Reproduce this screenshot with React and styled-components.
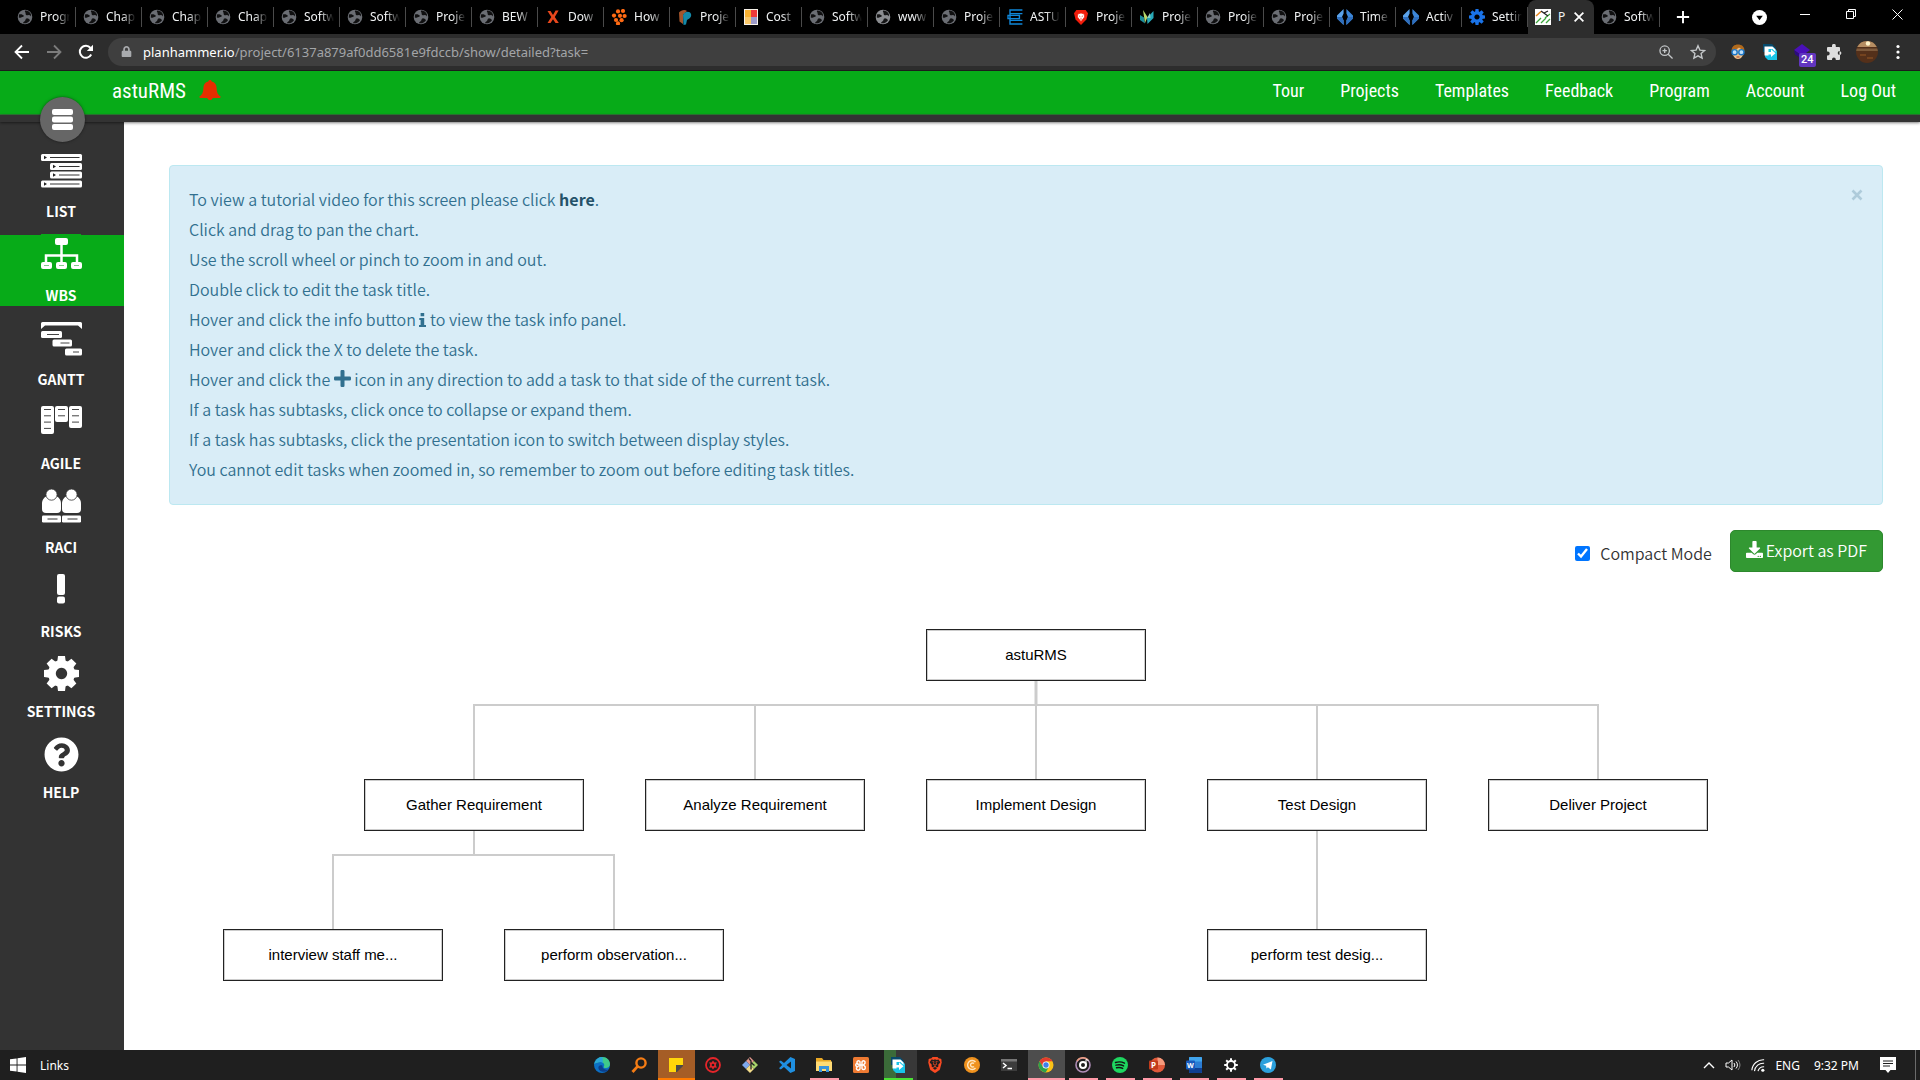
import React from "react";
import styled, { createGlobalStyle, css } from "styled-components";
import { FaDownload, FaQuestionCircle, FaLock } from "react-icons/fa";
import { SiBrave } from "react-icons/si";

const UI = `"Noto Sans", "Open Sans", sans-serif`;
const BODY = `"Noto Sans CJK SC", "Noto Sans", sans-serif`;
const NAV = `"Roboto Condensed", "Liberation Sans Narrow", Roboto, sans-serif`;

const GlobalStyle = createGlobalStyle`
  *, *::before, *::after { box-sizing: border-box; }
  body { margin: 0; background: #fff; font-family: ${UI}; }
  button { font: inherit; color: inherit; background: none; border: 0; padding: 0; cursor: pointer; }
  a { color: inherit; text-decoration: none; }
  svg { display: block; flex: none; }
`;

/* ---------- layout ---------- */

const Screen = styled.div`
  display: flex;
  flex-direction: column;
  min-height: 100vh;
`;

const TabStrip = styled.div`
  display: flex;
  align-items: stretch;
  height: 34px;
  padding-left: 10px;
  background: #000;
  color: #e8eaed;
`;

const Tab = styled.button`
  position: relative;
  display: flex;
  align-items: center;
  gap: 7px;
  width: 66px;
  padding-left: 7px;
  font-size: 12px;
  line-height: 16px;
  text-align: left;
  color: #f1f3f4;
  ${(p) =>
    p.$active
      ? css`
          padding-right: 8px;
          background: #2d2d2d;
          border-radius: 8px 8px 0 0;
        `
      : css`
          &::after {
            content: "";
            position: absolute;
            right: 0;
            top: 7px;
            height: 20px;
            width: 1px;
            background: #4a4a4a;
          }
        `}
`;

const TabTitle = styled.span`
  flex: 1;
  white-space: nowrap;
  ${(p) => !p.$solid && css`mask-image: linear-gradient(to right, #000 16px, transparent 30px);`}
`;

const NewTab = styled.button`
  display: grid;
  place-items: center;
  width: 46px;
`;

const WindowControls = styled.div`
  display: flex;
  align-items: flex-start;
  margin-left: auto;
`;

const WindowButton = styled.button`
  display: grid;
  place-items: center;
  width: 46px;
  height: ${(p) => (p.$tall ? 34 : 28)}px;
`;

const Toolbar = styled.div`
  display: flex;
  align-items: center;
  height: 37px;
  padding: 0 12px 1px;
  background: #2d2d2d;
  border-bottom: 1px solid #1c1c1c;
  color: #e8eaed;
`;

const ToolIcons = styled.div`
  display: flex;
  align-items: center;
  gap: ${(p) => p.$gap}px;
`;

const ToolButton = styled.button`
  display: grid;
  place-items: center;
  width: 20px;
  height: 24px;
`;

const AddressBar = styled.div`
  display: flex;
  align-items: center;
  flex: 1;
  height: 28px;
  margin: 0 12px;
  padding: 0 8px 0 13px;
  gap: 11px;
  border-radius: 14px;
  background: #3f3f3f;
  color: #a3a5a8;
  font-size: 13px;
`;

const Url = styled.div`
  flex: 1;
  white-space: nowrap;
  b { font-weight: 400; color: #fff; }
`;

const ExtensionButton = styled(ToolButton)`
  position: relative;
`;

const ExtensionBadge = styled.span`
  position: absolute;
  left: 7px;
  top: 13px;
  padding: 0 2px;
  border-radius: 2px;
  background: #6236c0;
  color: #fff;
  font: 500 11px/14px Roboto, sans-serif;
`;

const SiteHeader = styled.header`
  display: flex;
  align-items: center;
  justify-content: space-between;
  height: 44px;
  padding: 0 24px 4px 112px;
  background: #07ab18;
  border-bottom: 1px solid #2c7a33;
  color: #fff;
  font-family: ${NAV};
  font-size: 18px;
  line-height: 24px;
`;

const ProjectName = styled.h1`
  display: flex;
  align-items: center;
  gap: 13px;
  margin: 0;
  font-size: 21px;
  font-weight: 400;
`;

const SiteNav = styled.nav`
  display: flex;
  gap: 36px;
`;

const Divider = styled.div`
  position: relative;
  z-index: 1;
  height: 7px;
  background: #333;
  box-shadow: 0 1px 3px rgba(0, 0, 0, 0.5);
`;

const MenuButton = styled.button`
  position: absolute;
  left: 40px;
  top: -18px;
  display: grid;
  place-items: center;
  width: 45px;
  height: 45px;
  border-radius: 50%;
  background: #666;
  box-shadow: 0 0 3px rgba(0, 0, 0, 0.5);
`;

const Workspace = styled.div`
  display: flex;
  flex: 1;
`;

const Sidebar = styled.nav`
  display: flex;
  flex-direction: column;
  gap: 9px;
  width: 124px;
  padding-top: 29px;
  background: #333;
  color: #fff;
`;

const SideGroup = styled.div`
  display: flex;
  flex-direction: column;
  gap: ${(p) => p.$gap}px;
`;

const SideItem = styled.a`
  display: flex;
  flex-direction: column;
  align-items: center;
  justify-content: space-between;
  height: 71px;
  padding: ${(p) => (p.$low ? 5 : 3)}px 2px 1px 0;
  font: 700 14px/20px ${BODY};
  background: ${(p) => (p.$active ? "#07ab18" : "transparent")};
  svg { overflow: visible; }
`;

const Main = styled.main`
  flex: 1;
  min-width: 0;
  padding: 43px 37px 0 45px;
  font: 350 16px/30px ${BODY};
`;

const Alert = styled.section`
  display: flex;
  justify-content: space-between;
  align-items: flex-start;
  padding: 18px 19px 20px;
  border: 1px solid #bce8f1;
  border-radius: 4px;
  background: #d9edf7;
  color: #31708f;
`;

const Tips = styled.div`
  p { margin: 0; }
  svg { display: inline-block; vertical-align: -1px; }
  a { font-weight: 700; color: #245269; }
`;

const CloseButton = styled.button`
  display: grid;
  place-items: center;
  width: 13px;
  height: 22px;
  color: #aecbda;
`;

const Actions = styled.div`
  display: flex;
  justify-content: flex-end;
  align-items: center;
  gap: 18px;
  margin-top: 25px;
`;

const CheckLabel = styled.label`
  display: flex;
  align-items: center;
  gap: 10px;
  padding-top: 4px;
  color: #333;
  input { width: 15px; height: 15px; margin: 0; accent-color: #0075ff; }
`;

const ExportButton = styled.button`
  display: flex;
  align-items: center;
  gap: 3px;
  height: 42px;
  padding: 0 15px 2px;
  border: 1px solid #2d882d;
  border-radius: 5px;
  background: #339933;
  color: #fff;
  svg { margin-bottom: 2px; }
`;

const ChartPane = styled.section`
  display: flex;
  justify-content: center;
  padding: 57px 0 69px 20px;
`;

const Chart = styled.div`
  position: relative;
  flex: none;
  width: 1626px;
  height: 352px;
`;

const Node = styled.button`
  position: absolute;
  width: 220px;
  height: 52px;
  border: 1px solid #222;
  outline: 1px solid rgba(0, 0, 0, 0.2);
  outline-offset: -2px;
  background: #fff;
  color: #000;
  font: 400 15px/20px "Liberation Sans", Arial, sans-serif;
`;

const Taskbar = styled.footer`
  display: grid;
  grid-template-columns: 1fr auto 1fr;
  height: 30px;
  background: #1f1f1f;
  color: #fff;
  font-size: 12px;
`;

const StartArea = styled.div`
  display: flex;
  align-items: center;
  gap: 14px;
  padding-left: 10px;
`;

const Apps = styled.div`
  display: flex;
  margin-right: 50px;
`;

const AppButton = styled.button`
  position: relative;
  display: grid;
  place-items: center;
  width: 37px;
  height: 30px;
  background: ${(p) => p.$bg || "transparent"};
  ${(p) =>
    p.$line &&
    css`
      &::after {
        content: "";
        position: absolute;
        left: ${p.$wide ? 0 : 4}px;
        right: ${p.$wide ? 0 : 4}px;
        bottom: 0;
        height: 2px;
        background: ${p.$line};
      }
    `}
`;

const Tray = styled.div`
  display: flex;
  align-items: center;
  justify-content: flex-end;
  gap: 10px;
  padding-right: 4px;
`;

const TrayText = styled.span`
  padding-right: ${(p) => p.$after || 0}px;
  white-space: nowrap;
`;

const TrayEdge = styled.div`
  height: 30px;
  border-left: 1px solid #6b6b6b;
  margin-left: 9px;
`;

/* ---------- icons ---------- */

const Icon = ({ size = 16, box = 16, children, ...rest }) => (
  <svg width={size} height={size} viewBox={`0 0 ${box} ${box}`} fill="none" aria-hidden="true" {...rest}>
    {children}
  </svg>
);

const Globe = ({ light }) => (
  <Icon>
    <circle cx="8" cy="8" r="7.3" fill={light ? "#8b8d91" : "#6b6e74"} />
    <path
      d="M2 5.600c2-1 3.200 0 4.400.6.900.5.400 1.800-1 1.800-1.600 0-1.400 1.400-3.600.6zM8 1.600c-.6 1.500.8 1.600.6 2.800-.2 1.400 1.200 2.200 2.600 1.800 1.200-.4 1.800.4 2.600 1.200l.2-2C13 3 11 1.600 8 1.600zM6 14.200c.2-1.600 1.600-1.400 2.200-2.600.5-1 .2-2 1.400-2.200 1.400-.2 2.400.6 3.400 1.800C11.600 13.600 9 14.800 6 14.200z"
      fill="#000"
      fillOpacity=".85"
    />
  </Icon>
);
const XMark = () => (
  <Icon>
    <path d="M2.500 2h3L8 6l2.600-4.400h3L9.800 8l4 6h-3.300L8 10.200 5.500 14h-3L6.300 8z" fill="#e8471c" />
  </Icon>
);
const Honeycomb = () => (
  <Icon fill="#ff6a13">
    {[[7, 2.4], [12, 2], [3, 6.6], [9, 6.8], [13.6, 7], [5, 11], [10.6, 11.2], [7, 14.4]].map(([x, y], i) => (
      <circle key={i} cx={x} cy={y} r="2.1" />
    ))}
  </Icon>
);
const Leaf = () => (
  <Icon>
    <path d="M2 3.500C4 1 8 0 10 2L6 6v9l-3.500-2.500z" fill="#a3552c" />
    <path d="M6 6c2-4 7-4 8-1s-2 5-4 6l-1 4.500L6.500 16z" fill="#1489a8" />
  </Icon>
);
const Cost = () => (
  <Icon>
    <path d="M1 0h14v16H1z" fill="#f7f2ea" />
    <path d="M2 1h6v7H2z" fill="#f9b233" />
    <path d="M8 1h6v7H8z" fill="#f03a3a" />
    <path d="M2 8h6v7H2z" fill="#fbc96a" />
    <path d="M8 8h6v7H8z" fill="#9d9bc9" />
  </Icon>
);
const EBook = () => (
  <Icon stroke="#0f86d8" strokeWidth="1.4">
    <path d="M15.400 1H3v3.600h12.400M1 6.400h11.400v3.200H1zM3 11.400h12.400M15.400 15H3V1" />
  </Icon>
);
const Shield = () => (
  <Icon>
    <path d="M3.400 1h9.200L15 4.200l-1.600 6.400L8 16l-5.400-5.400L1 4.200z" fill="#f11c0b" />
    <path d="M4.800 5L8 4l3.200 1 .4 3L8 12.600 4.400 8zM6 6.800l1.400 1M10 6.800l-1.400 1M8 9v2" fill="#fff" stroke="#f11c0b" strokeWidth=".7" />
  </Icon>
);
const Teal = () => (
  <Icon>
    <path d="M1 6l4 2.500 1 6L1 11z" fill="#1c8e9c" />
    <path d="M4 1l4.500 7L6 14z" fill="#b7d86b" />
    <path d="M8 9l6.500-7v7L8.500 15z" fill="#27a9b8" />
    <path d="M8 9l3-5 .5 5z" fill="#8fd0c0" />
  </Icon>
);
const Diamond = () => (
  <Icon>
    <path d="M6.600 0v4.600L5 8l1.600 3.400V16L0 9.500v-3z" fill="#5aa2ea" />
    <path d="M9.400 0v4.600L11 8l-1.600 3.400V16L16 9.500v-3z" fill="#3c86d8" />
    <path d="M0 8h5l1.600 3.400V16L0 9.500zM16 8h-5l-1.600 3.400V16L16 9.500z" fill="#2f6fbe" />
  </Icon>
);
const Gear = ({ size = 16, color = "#fff", hole = 2.6, teeth = 3.6, radius = 5.8 }) => (
  <Icon size={size}>
    <path
      fillRule="evenodd"
      fill={color}
      d={`M8 ${8 - radius}a${radius} ${radius} 0 1 0 .01 0zM8 ${8 - hole}a${hole} ${hole} 0 1 1 -.01 0z`}
    />
    {[0, 45, 90, 135, 180, 225, 270, 315].map((a) => (
      <path key={a} transform={`rotate(${a} 8 8)`} fill={color} d={`M${8 - teeth / 2 + 0.3} 0h${teeth - 0.6}l.4 3.2h-${teeth + 0.2}z`} />
    ))}
  </Icon>
);
const PlanMark = () => (
  <Icon>
    <path d="M0 0h16v16H0z" fill="#fff" />
    <path d="M1 14l5-5M6 14l5-5M11 14l4-4M10 9l5-4" stroke="#3aa53a" strokeWidth="1.300" />
    <path d="M1 7l5-4.500" stroke="#e8871e" strokeWidth="1.500" />
    <path d="M6 2l7 5M9 4l4-2" stroke="#222" strokeWidth="1.300" />
  </Icon>
);
const Puzzle = () => (
  <Icon>
    <path
      d="M6 1.800a1.900 1.900 0 0 1 3.800 0V3H13a1 1 0 0 1 1 1v2.900h-.2a2.100 2.100 0 0 0 0 4.200H14V15a1 1 0 0 1-1 1h-3.200v-.6a1.900 1.900 0 0 0-3.800 0v.6H2a1 1 0 0 1-1-1v-3.600h.8a1.900 1.900 0 0 0 0-3.800H1V4a1 1 0 0 1 1-1h4zM13.500 7.200a1.900 1.900 0 1 1 0 3.800z"
      fill="#dedede"
    />
  </Icon>
);
const Bell = () => (
  <Icon size={22} box={22}>
    <path
      d="M11 0c1 0 1.700.7 1.700 1.600 3.200.7 4.900 3.200 4.900 6.400 0 4.600 1.500 7 4 8.400 0 1-.5 1.600-1.600 1.600h-6.200a2.900 2.900 0 0 1-5.600 0H2C.9 18 .4 17.400.4 16.400c2.500-1.400 4-3.800 4-8.400 0-3.200 1.700-5.700 4.900-6.400C9.300.7 10 0 11 0z"
      fill="#e62e00"
    />
  </Icon>
);
const InfoMark = () => (
  <svg width="7" height="14" viewBox="0 0 7 14" aria-hidden="true">
    <path d="M1.600 0h3.600v3.200H1.600zM.3 5h4.900v7H7v2H0v-2h1.600V7H.3z" fill="currentColor" />
  </svg>
);
const PlusMark = () => (
  <svg width="17" height="17" viewBox="0 0 17 17" aria-hidden="true">
    <path d="M6.500 1.200A1.200 1.200 0 0 1 7.700 0h1.600a1.200 1.200 0 0 1 1.200 1.200v5.300h5.300A1.200 1.200 0 0 1 17 7.700v1.600a1.200 1.200 0 0 1-1.200 1.200h-5.300v5.300A1.200 1.200 0 0 1 9.300 17H7.700a1.200 1.200 0 0 1-1.200-1.200v-5.300H1.200A1.200 1.200 0 0 1 0 9.300V7.700a1.200 1.200 0 0 1 1.200-1.200h5.300z" fill="currentColor" />
  </svg>
);

const ListIcon = () => (
  <svg width="41" height="40" viewBox="0 0 41 40">
    {[[0, 0], [9, 9], [9, 17.5], [0, 26.5]].map(([x, y]) => (
      <g key={y}>
        <rect x={x} y={y} width={41 - x} height="7" rx="1.5" fill="#fff" />
        <path d={`M${x + 3} ${y + 1.8}l3 1.7-3 1.7z`} fill="#222" />
        <path d={`M${x + 9} ${y + 3.5}H38.500`} stroke="#333" strokeWidth="1" />
      </g>
    ))}
  </svg>
);
const WbsIcon = () => (
  <svg width="41" height="40" viewBox="0 0 41 40">
    <path d="M0-4h40v2H0z" fill="#07ab18" />
    <rect x="14" y="0" width="13" height="7" rx="2" fill="#fff" />
    <path d="M20.500 6v18M5 25v-7.500h31V25" stroke="#fff" strokeWidth="2.500" fill="none" />
    {[0, 15, 30].map((x) => (
      <g key={x}>
        <rect x={x} y="24" width="11" height="7" rx="2" fill="#fff" />
        <path d={`M${x + 3} 27.500h5`} stroke="#7fce87" strokeWidth="1" />
      </g>
    ))}
  </svg>
);
const GanttIcon = () => (
  <svg width="41" height="40" viewBox="0 0 41 40">
    <path d="M1.500 0h38a1.500 1.500 0 0 1 1.500 1.500V7l-4-3.500H4L0 7V1.500A1.500 1.500 0 0 1 1.500 0z" fill="#fff" />
    {[[0, 9, 21, 6, 12], [11.5, 17.5, 19.5, 8, 9], [24, 26.5, 17, 8, 6]].map(([x, y, w, dx, dw]) => (
      <g key={x}>
        <rect x={x} y={y} width={w} height="7" rx="1.500" fill="#fff" />
        <path d={`M${x + dx} ${y + 3.5}h${dw}`} stroke="#444" strokeWidth="1" />
      </g>
    ))}
  </svg>
);
const AgileIcon = () => (
  <svg width="41" height="40" viewBox="0 0 41 40">
    {[[0, 28, 4], [14, 16, 2], [28, 22, 3]].map(([x, h, n]) => (
      <g key={x}>
        <rect x={x} y="0" width="13" height={h} rx="2" fill="#fff" />
        {Array.from({ length: n }, (_, i) => (
          <path key={i} d={`M${x + 3} ${3.5 + i * 6.3}h7`} stroke="#444" strokeWidth="1" />
        ))}
      </g>
    ))}
  </svg>
);
const RaciIcon = () => (
  <svg width="41" height="40" viewBox="0 0 41 40">
    {[1, 21].map((x) => (
      <g key={x} transform={`translate(${x} -1)`}>
        <path d="M0 20V14.500C0 10.500 2.500 8 5 7h9c2.500 1 5 3.500 5 7.500V20a4 4 0 0 1-4 4H4a4 4 0 0 1-4-4z" fill="#fff" />
        <circle cx="9.500" cy="5.600" r="5.600" fill="#fff" stroke="#333" strokeWidth=".8" />
        <rect y="26.500" width="19" height="7" rx="1.200" fill="#fff" />
        <path d="M5.500 30h10" stroke="#333" />
      </g>
    ))}
  </svg>
);
const RiskIcon = () => (
  <svg width="41" height="40" viewBox="0 0 41 40">
    <rect x="16" y="0" width="8" height="21" rx="2" fill="#fff" />
    <rect x="16" y="22.500" width="8" height="7" rx="2" fill="#fff" />
  </svg>
);

const appIcons = {
  edge: (
    <Icon>
      <circle cx="8" cy="8" r="8" fill="#0c6fc4" />
      <path d="M.4 7C1.500 1.800 6 0 8.500 0 13 0 16 3.400 16 7c0 2.600-2 4-4.200 4-2 0-2.600-.9-1.800-1.800C11 7 9 5 6.500 5 3.500 5 1.200 6 .4 7z" fill="#3fc98a" />
      <path d="M.4 7C1.500 1.800 6 0 8.500 0L9 5.800C8 5.200 7.300 5 6.500 5 3.500 5 1.200 6 .4 7z" fill="#2aa7d8" />
      <path d="M4.400 10.500C4.400 14 8 15.400 12 14.600c1.400-.4 2.400-1.600 2.800-2.400-3 1.400-6.800 0-6.400-3.600C6 7.600 4.400 9 4.400 10.500z" fill="#0b3f8c" />
    </Icon>
  ),
  search: (
    <Icon>
      <circle cx="10" cy="6" r="4.600" stroke="#f57c14" strokeWidth="2.400" />
      <path d="M6.600 9.400L1.500 15" stroke="#f57c14" strokeWidth="2.800" />
    </Icon>
  ),
  notes: (
    <Icon>
      <path d="M1 1h14v7l-7 7H1z" fill="#ffd60a" />
      <path d="M15 8v1l-6 6H8V8z" fill="#4a4a4a" />
    </Icon>
  ),
  red: (
    <Icon>
      <circle cx="8" cy="8" r="7" stroke="#e5252a" strokeWidth="1.800" />
      <path d="M8 3.600l1.400 1.900 2.400-.2-1 2.700 1 2.700-2.400-.2L8 12.400 6.600 10.500l-2.400.2 1-2.700-1-2.700 2.400.2z" fill="#e5252a" />
      <circle cx="8" cy="8" r="1.300" fill="#1f1f1f" />
    </Icon>
  ),
  git: (
    <Icon>
      <path d="M8 0l4 4-4 4-4-4z" fill="#e79a90" />
      <path d="M4 4l4 4-4 4-4-4z" fill="#7fa8ec" />
      <path d="M12 4l4 4-4 4-4-4z" fill="#a9d36a" />
      <path d="M8 8l4 4-4 4-4-4z" fill="#f3dc8a" />
      <path d="M7 1.500L9 4v8.500M9 5.500l3.500 3" stroke="#222" strokeWidth="1.300" />
    </Icon>
  ),
  code: (
    <Icon>
      <path fillRule="evenodd" d="M11.400 0L16 2v12l-4.600 2L5 10l-3.200 2.400L0 11.200 3.200 8 0 4.800l1.800-1.200L5 6zM12 4.600L7.500 8l4.500 3.400z" fill="#1f8fe0" />
    </Icon>
  ),
  files: (
    <Icon>
      <path d="M0 1h6l1.500 2H15v11H0z" fill="#e9a825" />
      <path d="M0 4.500h16V14H0z" fill="#ffdb75" />
      <path d="M3 15V9h10v6h-3v-3H6v3z" fill="#3a94dc" />
    </Icon>
  ),
  xampp: (
    <Icon>
      <rect width="16" height="16" rx="1.500" fill="#ee7a32" />
      <path d="M5.500 6.500a1.800 1.800 0 1 0-1.200 3.300 1.800 1.800 0 1 0 2.700 1.600V4.800a1.600 1.600 0 0 0-3 0v1.500l1.500 1.700h5L12 6.300V4.800a1.600 1.600 0 0 0-3 0v6.600a1.700 1.700 0 0 0 3.200 0V9.800L10.500 8" stroke="#fff" strokeWidth="1.400" />
    </Icon>
  ),
  arrow: (
    <Icon>
      <path d="M1 0h9l4 4v4H1z" fill="#064a6c" />
      <path d="M3 3h8l4 4v9H6l-3-3z" fill="#18c5e8" />
      <path d="M2.500 2.500h8l3 3V8l-3-3h-4v6.500h-4z" fill="#fff" />
      <path d="M5 8h4V5.200L13.500 9.200 9 13v-2.600H5z" fill="#fff" />
    </Icon>
  ),
  brave: <SiBrave size={16} color="#fb4a22" />,
  coin: (
    <Icon>
      <circle cx="8" cy="8" r="8" fill="#f0921e" />
      <path d="M11.500 5A4.500 4.500 0 1 0 11.500 11M10 6.600a2 2 0 1 0 0 2.800" stroke="#ffe6c0" strokeWidth="1.400" />
    </Icon>
  ),
  terminal: (
    <Icon>
      <path d="M0 2h16v12H0z" fill="#3c3c3c" />
      <path d="M0 2h16v2.500H0z" fill="#777" />
      <path d="M2 6l3 2.500L2 11M6.500 11.500H11" stroke="#fff" strokeWidth="1.500" />
    </Icon>
  ),
  chrome: (
    <Icon>
      <circle cx="8" cy="8" r="7.500" fill="#fbc116" />
      <path d="M1.500 4.300A7.500 7.500 0 0 1 14.500 4.300H8L4.800 9.800z" fill="#e33b2e" />
      <path d="M1.500 4.300A7.500 7.500 0 0 0 7.600 15.500L11 9.800 8 11.500 4.800 9.800z" fill="#2ba24c" />
      <circle cx="8" cy="8" r="3.500" fill="#fff" />
      <circle cx="8" cy="8" r="2.700" fill="#3f7fe8" />
    </Icon>
  ),
  disc: (
    <Icon>
      <circle cx="8" cy="8" r="7" stroke="#b08fb8" strokeWidth="1.600" />
      <path d="M2 4a7 7 0 0 1 11-1" stroke="#e99a7c" strokeWidth="1.600" />
      <circle cx="8" cy="8" r="3" stroke="#fff" strokeWidth="2" />
      <path d="M11 8V2.500l2.500 1" stroke="#fff" />
    </Icon>
  ),
  spotify: (
    <Icon>
      <circle cx="8" cy="8" r="8" fill="#1ed760" />
      <path d="M3.500 5.500c3-1 6.500-.7 9 .7M4 8.200c2.600-.8 5.400-.5 7.600.7M4.500 10.800c2.200-.6 4.400-.4 6.200.6" stroke="#121212" strokeWidth="1.400" strokeLinecap="round" />
    </Icon>
  ),
  slides: (
    <Icon>
      <circle cx="8.500" cy="8" r="7.500" fill="#e0593a" />
      <path d="M8.500.5A7.500 7.500 0 0 1 16 8H8.500z" fill="#f59a7c" />
      <rect y="3.500" width="9" height="9" rx="1" fill="#c13b1b" />
      <text x="2" y="11" fontSize="8" fontWeight="700" fill="#fff">P</text>
    </Icon>
  ),
  word: (
    <Icon>
      <rect x="3" width="13" height="16" rx="1" fill="#2b7cd3" />
      <path d="M3 1a1 1 0 0 1 1-1h11a1 1 0 0 1 1 1v3.500H3z" fill="#41a5ee" />
      <path d="M3 11h13v4a1 1 0 0 1-1 1H4a1 1 0 0 1-1-1z" fill="#103f91" />
      <rect y="3.500" width="9" height="9" rx="1" fill="#185abd" />
      <text x="1" y="11" fontSize="7" fontWeight="700" fill="#fff">W</text>
    </Icon>
  ),
  gear: (
    <Icon>
      <circle cx="8" cy="8" r="4" stroke="#fff" strokeWidth="1.800" />
      {[0, 45, 90, 135, 180, 225, 270, 315].map((a) => (
        <path key={a} transform={`rotate(${a} 8 8)`} d="M8 1.200V4" stroke="#fff" strokeWidth="2" />
      ))}
    </Icon>
  ),
  telegram: (
    <Icon>
      <circle cx="8" cy="8" r="8" fill="#2ca0dc" />
      <path d="M3 7.800l9.500-3.800-1.600 8.400-3-2.200-1.400 1.400-.4-2.800z" fill="#fff" />
    </Icon>
  ),
};

/* ---------- data ---------- */

const tabs = [
  ["Progr", <Globe />], ["Chap", <Globe />], ["Chap", <Globe />], ["Chap", <Globe />],
  ["Softw", <Globe />], ["Softw", <Globe />], ["Proje", <Globe />], ["BEW", <Globe />],
  ["Dow", <XMark />], ["How", <Honeycomb />], ["Proje", <Leaf />], ["Cost", <Cost />],
  ["Softw", <Globe />], ["www", <Globe light />], ["Proje", <Globe />], ["ASTU", <EBook />],
  ["Proje", <Shield />], ["Proje", <Teal />], ["Proje", <Globe />], ["Proje", <Globe />],
  ["Time", <Diamond />], ["Activ", <Diamond />], ["Settin", <Gear color="#1a73e8" />],
  ["P", <PlanMark />, true], ["Softw", <Globe />],
];

const navLinks = ["Tour", "Projects", "Templates", "Feedback", "Program", "Account", "Log Out"];

const sideMain = [
  ["LIST", <ListIcon />],
  ["WBS", <WbsIcon />],
  ["GANTT", <GanttIcon />],
  ["AGILE", <AgileIcon />],
  ["RACI", <RaciIcon />],
  ["RISKS", <RiskIcon />],
];

const nodes = [
  ["astuRMS", 703, 0],
  ["Gather Requirement", 141, 150],
  ["Analyze Requirement", 422, 150],
  ["Implement Design", 703, 150],
  ["Test Design", 984, 150],
  ["Deliver Project", 1265, 150],
  ["interview staff me...", 0, 300],
  ["perform observation...", 281, 300],
  ["perform test desig...", 984, 300],
];

const PINK = "#ff9aa8";
const apps = [
  { name: "Edge", icon: "edge" },
  { name: "Search", icon: "search" },
  { name: "Sticky Notes", icon: "notes", bg: "#a55d26", line: "#ff7a00", wide: true },
  { name: "Recorder", icon: "red" },
  { name: "Git", icon: "git" },
  { name: "Code", icon: "code" },
  { name: "Explorer", icon: "files", line: PINK },
  { name: "XAMPP", icon: "xampp" },
  {
    name: "Transfer",
    icon: "arrow",
    bg: "linear-gradient(to right, transparent 4px, #3b6b39 4px 16px, #383838 16px)",
    line: "#4be234",
  },
  { name: "Brave", icon: "brave" },
  { name: "Coin", icon: "coin" },
  { name: "Terminal", icon: "terminal" },
  { name: "Chrome", icon: "chrome", bg: "#4d4d4d", line: PINK, wide: true },
  { name: "Music", icon: "disc", line: PINK },
  { name: "Spotify", icon: "spotify", line: PINK },
  { name: "PowerPoint", icon: "slides", line: PINK },
  { name: "Word", icon: "word", line: PINK },
  { name: "Settings", icon: "gear", line: PINK },
  { name: "Telegram", icon: "telegram", line: PINK },
];

/* ---------- sections ---------- */

function Browser() {
  return (
    <>
      <TabStrip>
        {tabs.map(([title, icon, active], i) => (
          <Tab key={i} $active={active}>
            {icon}
            <TabTitle $solid={active}>{title}</TabTitle>
            {active && (
              <Icon size={14}>
                <path d="M3 3l10 10M13 3L3 13" stroke="#fff" strokeWidth="2" />
              </Icon>
            )}
          </Tab>
        ))}
        <NewTab aria-label="New tab">
          <Icon size={14}>
            <path d="M8 1v14M1 8h14" stroke="#fff" strokeWidth="2.200" />
          </Icon>
        </NewTab>
        <WindowControls>
          <WindowButton aria-label="Tab search" $tall>
            <Icon size={15}>
              <circle cx="8" cy="8" r="8" fill="#fff" />
              <path d="M4.500 6h7L8 11z" fill="#000" />
            </Icon>
          </WindowButton>
          <WindowButton aria-label="Minimize">
            <Icon size={10} box={10}><path d="M0 5.500h10" stroke="#fff" /></Icon>
          </WindowButton>
          <WindowButton aria-label="Restore">
            <Icon size={10} box={10}>
              <path d="M.5 2.500h7v7h-7zM2.500 2.500v-2h7v7h-2" stroke="#fff" />
            </Icon>
          </WindowButton>
          <WindowButton aria-label="Close">
            <Icon size={11} box={11}><path d="M.5.5l10 10M10.500.5l-10 10" stroke="#fff" /></Icon>
          </WindowButton>
        </WindowControls>
      </TabStrip>
      <Toolbar>
        <ToolIcons $gap={12}>
          <ToolButton aria-label="Back">
            <Icon><path d="M15 8H2M8 1.500L1.500 8 8 14.500" stroke="#fff" strokeWidth="1.800" /></Icon>
          </ToolButton>
          <ToolButton aria-label="Forward">
            <Icon><path d="M1 8h13M8 1.500L14.500 8 8 14.500" stroke="#7c7c7c" strokeWidth="1.800" /></Icon>
          </ToolButton>
          <ToolButton aria-label="Reload">
            <Icon>
              <path d="M13.200 10.500A6 6 0 1 1 12.500 4" stroke="#fff" strokeWidth="2" />
              <path d="M15 .8V7H8.800z" fill="#fff" />
            </Icon>
          </ToolButton>
        </ToolIcons>
        <AddressBar>
          <FaLock size={11} color="#a9abae" />
          <Url><b>planhammer.io</b>/project/6137a879af0dd6581e9fdccb/show/detailed?task=</Url>
          <ToolIcons $gap={12}>
            <ToolButton aria-label="Zoom">
              <Icon size={14}>
                <circle cx="6.500" cy="6.500" r="5.400" stroke="#c4c7c9" strokeWidth="1.500" />
                <path d="M10.500 10.500l5 5M6.500 4v5M4 6.500h5" stroke="#c4c7c9" strokeWidth="1.500" />
              </Icon>
            </ToolButton>
            <ToolButton aria-label="Bookmark">
              <Icon>
                <path d="M8 1.800l1.900 4.300 4.700.4-3.500 3.100 1 4.600L8 11.800l-4.100 2.400 1-4.600L1.400 6.500l4.700-.4z" stroke="#c4c7c9" strokeWidth="1.400" />
              </Icon>
            </ToolButton>
          </ToolIcons>
        </AddressBar>
        <ToolIcons $gap={12}>
          <ToolButton aria-label="Avatar extension">
            <Icon>
              <path d="M1.500 7C1.500 2.500 4.500.5 8 .5s6.500 2 6.500 6.500L13 12H3z" fill="#b06a1d" />
              <path d="M3.500 5.500C6 5.500 8 4.500 9 3.500l3.500 2.500v6c-1 2-2.500 3-4.500 3s-3.500-1-4.500-3z" fill="#f0c08a" />
              <circle cx="4.600" cy="8.200" r="2.600" fill="#bfe0fb" stroke="#1a76c8" strokeWidth="1.400" />
              <circle cx="11.400" cy="8.200" r="2.600" fill="#bfe0fb" stroke="#1a76c8" strokeWidth="1.400" />
              <path d="M6.500 13h3" stroke="#a03a2a" />
            </Icon>
          </ToolButton>
          <ToolButton aria-label="Transfer extension">{appIcons.arrow}</ToolButton>
          <ExtensionButton aria-label="Counter extension">
            <Icon>
              <path d="M8 0l8 6-8 6-8-6z" fill="#4a10b8" />
              <path d="M0 6l8 6v3L1 10.500z" fill="#2c0a80" />
            </Icon>
            <ExtensionBadge>24</ExtensionBadge>
          </ExtensionButton>
          <ToolButton aria-label="Extensions"><Puzzle /></ToolButton>
          <ToolButton aria-label="Profile">
            <Icon size={22} box={22}>
              <circle cx="11" cy="11" r="11" fill="#54301a" />
              <path d="M1.200 6a11 11 0 0 1 19.600 0z" fill="#b58d62" />
              <path d="M.7 7.500h20.600l.5 2.500H.2z" fill="#7d5a3c" />
              <circle cx="12" cy="2.500" r="2.200" fill="#fff3c9" />
              <path d="M4 14h6M11 17h6" stroke="#74431f" strokeWidth="2" />
            </Icon>
          </ToolButton>
          <ToolButton aria-label="Menu">
            <Icon fill="#fff">
              <circle cx="8" cy="2.500" r="1.600" /><circle cx="8" cy="8" r="1.600" /><circle cx="8" cy="13.500" r="1.600" />
            </Icon>
          </ToolButton>
        </ToolIcons>
      </Toolbar>
    </>
  );
}

function SideLink({ label, icon, active, low }) {
  return (
    <SideItem href="#" $active={active} $low={low}>
      {icon}
      {label}
    </SideItem>
  );
}

function OrgChart() {
  return (
    <ChartPane aria-label="Work breakdown structure">
      <Chart>
        <svg width="1626" height="352" fill="none" stroke="#ccc" strokeWidth="2">
          <path d="M251 151V76H1375V151M532 76V151M813 76V151M1094 76V301" />
          <path d="M110 301V226H391V301M251 201V226" />
          <path d="M813 51V77" strokeWidth="3" />
        </svg>
        {nodes.map(([text, x, y]) => (
          <Node key={text} style={{ left: x, top: y }}>{text}</Node>
        ))}
      </Chart>
    </ChartPane>
  );
}

export default function App() {
  return (
    <Screen>
      <GlobalStyle />
      <Browser />
      <SiteHeader>
        <ProjectName>astuRMS <Bell /></ProjectName>
        <SiteNav>
          {navLinks.map((l) => <a key={l} href="#">{l}</a>)}
        </SiteNav>
      </SiteHeader>
      <Divider>
        <MenuButton aria-label="Toggle menu">
          <svg width="21" height="21" viewBox="0 0 21 21" fill="#fff">
            <rect width="21" height="6" rx="2" /><rect y="7.500" width="21" height="6" rx="2" /><rect y="15" width="21" height="6" rx="2" />
          </svg>
        </MenuButton>
      </Divider>
      <Workspace>
        <Sidebar>
          <SideGroup $gap={13}>
            {sideMain.map(([label, icon]) => (
              <SideLink key={label} label={label} icon={icon} active={label === "WBS"} />
            ))}
          </SideGroup>
          <SideGroup $gap={10}>
            <SideLink low label="SETTINGS" icon={<Gear size={35} teeth={3.8} radius={6.2} />} />
            <SideLink low label="HELP" icon={<FaQuestionCircle size={35} />} />
          </SideGroup>
        </Sidebar>
        <Main>
          <Alert>
            <Tips>
              <p>To view a tutorial video for this screen please click <a href="#">here</a>.</p>
              <p>Click and drag to pan the chart.</p>
              <p>Use the scroll wheel or pinch to zoom in and out.</p>
              <p>Double click to edit the task title.</p>
              <p>Hover and click the info button <InfoMark /> to view the task info panel.</p>
              <p>Hover and click the X to delete the task.</p>
              <p>Hover and click the <PlusMark /> icon in any direction to add a task to that side of the current task.</p>
              <p>If a task has subtasks, click once to collapse or expand them.</p>
              <p>If a task has subtasks, click the presentation icon to switch between display styles.</p>
              <p>You cannot edit tasks when zoomed in, so remember to zoom out before editing task titles.</p>
            </Tips>
            <CloseButton aria-label="Close">
              <Icon size={12} box={12}><path d="M1.500 1.500l9 9M10.500 1.500l-9 9" stroke="currentColor" strokeWidth="2.600" /></Icon>
            </CloseButton>
          </Alert>
          <Actions>
            <CheckLabel>
              <input type="checkbox" defaultChecked />
              Compact Mode
            </CheckLabel>
            <ExportButton><FaDownload size={17} />Export as PDF</ExportButton>
          </Actions>
          <OrgChart />
        </Main>
      </Workspace>
      <Taskbar>
        <StartArea>
          <Icon fill="#fff">
            <path d="M0 2.300l6.600-.9v6.200H0zM7.500 1.200L16 0v7.600H7.500zM0 8.400h6.600v6.200L0 13.700zM7.500 8.400H16V16l-8.500-1.200z" />
          </Icon>
          Links
        </StartArea>
        <Apps>
          {apps.map(({ name, icon, bg, line, wide }) => (
            <AppButton key={name} aria-label={name} $bg={bg} $line={line} $wide={wide}>{appIcons[icon]}</AppButton>
          ))}
        </Apps>
        <Tray>
          <Icon size={12} box={12}><path d="M1 9l5-5 5 5" stroke="#fff" strokeWidth="1.400" /></Icon>
          <Icon>
            <path d="M1 6h2.500L7 3v10L3.500 10H1z" stroke="#fff" />
            <path d="M9 6a3 3 0 0 1 0 4M11 4.500a5 5 0 0 1 0 7" stroke="#fff" />
            <path d="M13 3a8 8 0 0 1 0 10" stroke="#888" />
          </Icon>
          <Icon size={14}>
            <path d="M1 14A13 13 0 0 1 15 2M4 15A10 10 0 0 1 15 6M8 15a7 7 0 0 1 7-5" stroke="#fff" strokeWidth="1.300" />
            <circle cx="13.500" cy="14" r="1.800" fill="#fff" />
          </Icon>
          <TrayText $after={4}>ENG</TrayText>
          <TrayText $after={11}>9:32 PM</TrayText>
          <Icon>
            <path d="M0 0h16v13h-5.500L8 16l-2.500-3H0z" fill="#fff" />
            <path d="M3 4h10M3 6.500h10M3 9h7" stroke="#1f1f1f" />
          </Icon>
          <TrayEdge />
        </Tray>
      </Taskbar>
    </Screen>
  );
}
